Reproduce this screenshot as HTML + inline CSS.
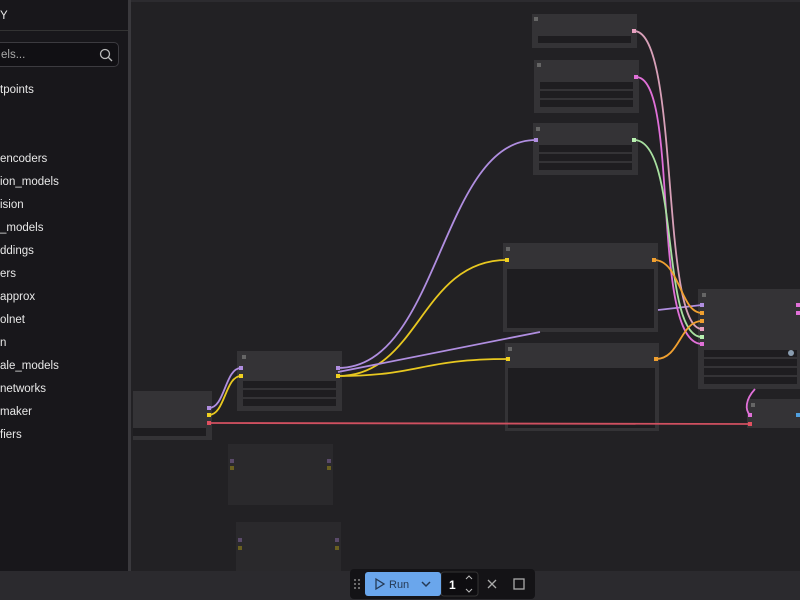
<!DOCTYPE html>
<html><head><meta charset="utf-8"><style>
*{margin:0;padding:0;box-sizing:border-box}
body{width:800px;height:600px;overflow:hidden;background:#222124;font-family:"Liberation Sans",sans-serif;position:relative}
svg{position:absolute;left:0;top:0}
#side{position:absolute;left:0;top:0;width:131px;height:571px;background:#18171b;border-right:3px solid #3a393d;color:#e8e8e8;font-size:11.5px}
#side .hd{height:31px;border-bottom:1px solid #333;padding:10px 0 0 0}
#side .sr{position:absolute;left:-10px;top:42px;width:129px;height:25px;border:1px solid #3c3b40;border-radius:5px;background:#111014;color:#aaa;padding:6px 0 0 10px}
#side .it{position:absolute;left:0}
#bot{position:absolute;left:0;top:571px;width:800px;height:29px;background:#2b2a2e}
#tb{position:absolute;left:350px;top:569px;width:185px;height:30px;background:#141316;border-radius:4px}
#run{position:absolute;left:365px;top:572px;width:76px;height:24px;background:#6aa6ec;border-radius:3px;color:#253a55;font-size:11px}
</style></head><body>
<svg width="800" height="600">
<rect x="300" y="0" width="80" height="2" fill="#5a86c8"/>
<rect x="0" y="0" width="800" height="2" fill="#2c2b2f"/>
<g fill="#343336">
<rect x="532" y="14" width="105" height="34"/>
<rect x="534" y="60" width="105" height="53"/>
<rect x="533" y="123" width="105" height="52"/>
<rect x="503" y="243" width="155" height="89"/>
<rect x="505" y="343" width="154" height="88"/>
<rect x="698" y="289" width="102" height="100"/>
<rect x="747" y="399" width="53" height="29"/>
<rect x="237" y="351" width="105" height="60"/>
<rect x="133" y="391" width="79" height="49"/>
</g>
<g fill="#2b2a2d" opacity=".9">
<rect x="228" y="444" width="105" height="61"/>
<rect x="236" y="522" width="105" height="49"/>
</g>
<g fill="#1e1d20">
<rect x="538" y="36" width="93" height="7"/>
<rect x="540" y="82" width="93" height="7"/><rect x="540" y="91" width="93" height="7"/><rect x="540" y="100" width="93" height="7"/>
<rect x="539" y="145" width="93" height="7"/><rect x="539" y="154" width="93" height="7"/><rect x="539" y="163" width="93" height="7"/>
<rect x="507" y="269" width="147" height="59"/>
<rect x="508" y="368" width="147" height="60"/>
<rect x="704" y="350" width="93" height="7"/><rect x="704" y="359" width="93" height="7"/><rect x="704" y="368" width="93" height="7"/><rect x="704" y="377" width="93" height="7"/>
<rect x="243" y="381" width="93" height="7"/><rect x="243" y="390" width="93" height="7"/><rect x="243" y="399" width="93" height="7"/>
<rect x="133" y="428" width="73" height="8"/>
</g>
<circle cx="791" cy="353" r="3" fill="#8a9db0"/>
<g fill="none" stroke-width="1.8">
<path d="M209 423 L750 424" stroke="#d05060"/>
<path d="M209 408 C225 408 225 368 241 368" stroke="#b08ee0"/>
<path d="M209 415 C225 415 225 376 241 376" stroke="#e8c820"/>
<path d="M338 368 C440 368 440 140 536 140" stroke="#b08ee0"/>
<path d="M338 376 C420 376 420 260 507 260" stroke="#e8c820"/>
<path d="M338 376 C420 376 420 359 508 359" stroke="#e8c820"/>
<path d="M338 372 L540 332" stroke="#b08ee0"/>
<path d="M658 310 L702 305" stroke="#b08ee0"/>
<path d="M634 31 C680 31 660 329 702 329" stroke="#d8a0b8"/>
<path d="M636 77 C680 77 650 344 702 344" stroke="#e070d8"/>
<path d="M634 140 C680 140 660 337 702 337" stroke="#a8e0a0"/>
<path d="M654 260 C680 260 680 313 702 313" stroke="#f0a030"/>
<path d="M656 359 C680 359 680 321 702 321" stroke="#f0a030"/>
<path d="M755 389 C745 400 745 410 750 415" stroke="#e070d8"/>
</g>
<g>
<rect x="534" y="17" width="4" height="4" fill="#666"/><rect x="537" y="63" width="4" height="4" fill="#666"/><rect x="536" y="127" width="4" height="4" fill="#666"/><rect x="506" y="247" width="4" height="4" fill="#666"/><rect x="508" y="347" width="4" height="4" fill="#666"/><rect x="702" y="293" width="4" height="4" fill="#666"/><rect x="751" y="403" width="4" height="4" fill="#666"/><rect x="242" y="355" width="4" height="4" fill="#666"/>
<rect x="632" y="29" width="4" height="4" fill="#e8a0c0"/><rect x="634" y="75" width="4" height="4" fill="#e070d8"/>
<rect x="534" y="138" width="4" height="4" fill="#b08ee0"/><rect x="632" y="138" width="4" height="4" fill="#b8f0b0"/>
<rect x="505" y="258" width="4" height="4" fill="#f0d020"/><rect x="652" y="258" width="4" height="4" fill="#f0a030"/>
<rect x="506" y="357" width="4" height="4" fill="#f0d020"/><rect x="654" y="357" width="4" height="4" fill="#f0a030"/>
<rect x="700" y="303" width="4" height="4" fill="#b08ee0"/><rect x="700" y="311" width="4" height="4" fill="#f0a030"/><rect x="700" y="319" width="4" height="4" fill="#f0a030"/><rect x="700" y="327" width="4" height="4" fill="#e8a0c0"/><rect x="700" y="335" width="4" height="4" fill="#b8f0b0"/><rect x="700" y="342" width="4" height="4" fill="#e070d8"/>
<rect x="796" y="303" width="4" height="4" fill="#e070d8"/><rect x="796" y="311" width="4" height="4" fill="#e070d8"/>
<rect x="748" y="413" width="4" height="4" fill="#e070d8"/><rect x="748" y="422" width="4" height="4" fill="#e05060"/><rect x="796" y="413" width="4" height="4" fill="#50a0e0"/>
<rect x="239" y="366" width="4" height="4" fill="#b08ee0"/><rect x="239" y="374" width="4" height="4" fill="#f0d020"/>
<rect x="336" y="366" width="4" height="4" fill="#b08ee0"/><rect x="336" y="374" width="4" height="4" fill="#f0d020"/>
<rect x="207" y="406" width="4" height="4" fill="#b08ee0"/><rect x="207" y="413" width="4" height="4" fill="#f0d020"/><rect x="207" y="421" width="4" height="4" fill="#e05060"/>
<rect x="230" y="459" width="4" height="4" fill="#5a4a6a"/><rect x="230" y="466" width="4" height="4" fill="#6a6020"/><rect x="327" y="459" width="4" height="4" fill="#5a4a6a"/><rect x="327" y="466" width="4" height="4" fill="#6a6020"/>
<rect x="238" y="538" width="4" height="4" fill="#5a4a6a"/><rect x="238" y="546" width="4" height="4" fill="#6a6020"/><rect x="335" y="538" width="4" height="4" fill="#5a4a6a"/><rect x="335" y="546" width="4" height="4" fill="#6a6020"/>
</g>
</svg>
<div id="side">
<div class="hd">Y</div>
<div class="sr">els...<svg style="left:108px;top:5px" width="14" height="14"><circle cx="6" cy="6" r="4.5" fill="none" stroke="#bbb" stroke-width="1.3"/><path d="M9.5 9.5L13 13" stroke="#bbb" stroke-width="1.3"/></svg></div>
<div class="it" style="top:84px">tpoints</div>
<div class="it" style="top:153px">encoders</div>
<div class="it" style="top:176px">ion_models</div>
<div class="it" style="top:199px">ision</div>
<div class="it" style="top:222px">_models</div>
<div class="it" style="top:245px">ddings</div>
<div class="it" style="top:268px">ers</div>
<div class="it" style="top:291px">approx</div>
<div class="it" style="top:314px">olnet</div>
<div class="it" style="top:337px">n</div>
<div class="it" style="top:360px">ale_models</div>
<div class="it" style="top:383px">networks</div>
<div class="it" style="top:406px">maker</div>
<div class="it" style="top:429px">fiers</div>
</div>
<div id="bot"></div>
<div id="tb">
<svg width="185" height="30"><g fill="#888"><circle cx="5" cy="11" r="1"/><circle cx="9" cy="11" r="1"/><circle cx="5" cy="15" r="1"/><circle cx="9" cy="15" r="1"/><circle cx="5" cy="19" r="1"/><circle cx="9" cy="19" r="1"/></g>
<rect x="91" y="3" width="37" height="24" rx="3" fill="#0e0d10" stroke="#333"/>
<text x="99" y="20" fill="#fff" font-size="12" font-weight="bold" font-family="Liberation Sans">1</text>
<path d="M116 10l3-3 3 3M116 20l3 3 3-3" stroke="#bbb" fill="none"/>
<path d="M138 11l8 8M146 11l-8 8" stroke="#aaa" stroke-width="1.3"/>
<rect x="164" y="10" width="10" height="10" fill="none" stroke="#aaa" stroke-width="1.3"/>
</svg>
</div>
<div id="run"><svg width="76" height="24"><path d="M11 7l8 5-8 5z" fill="none" stroke="#253a55" stroke-width="1.3"/><text x="24" y="16" fill="#253a55" font-size="11" font-family="Liberation Sans">Run</text><path d="M57 10l4 4 4-4" fill="none" stroke="#253a55" stroke-width="1.5"/></svg></div>
</body></html>
